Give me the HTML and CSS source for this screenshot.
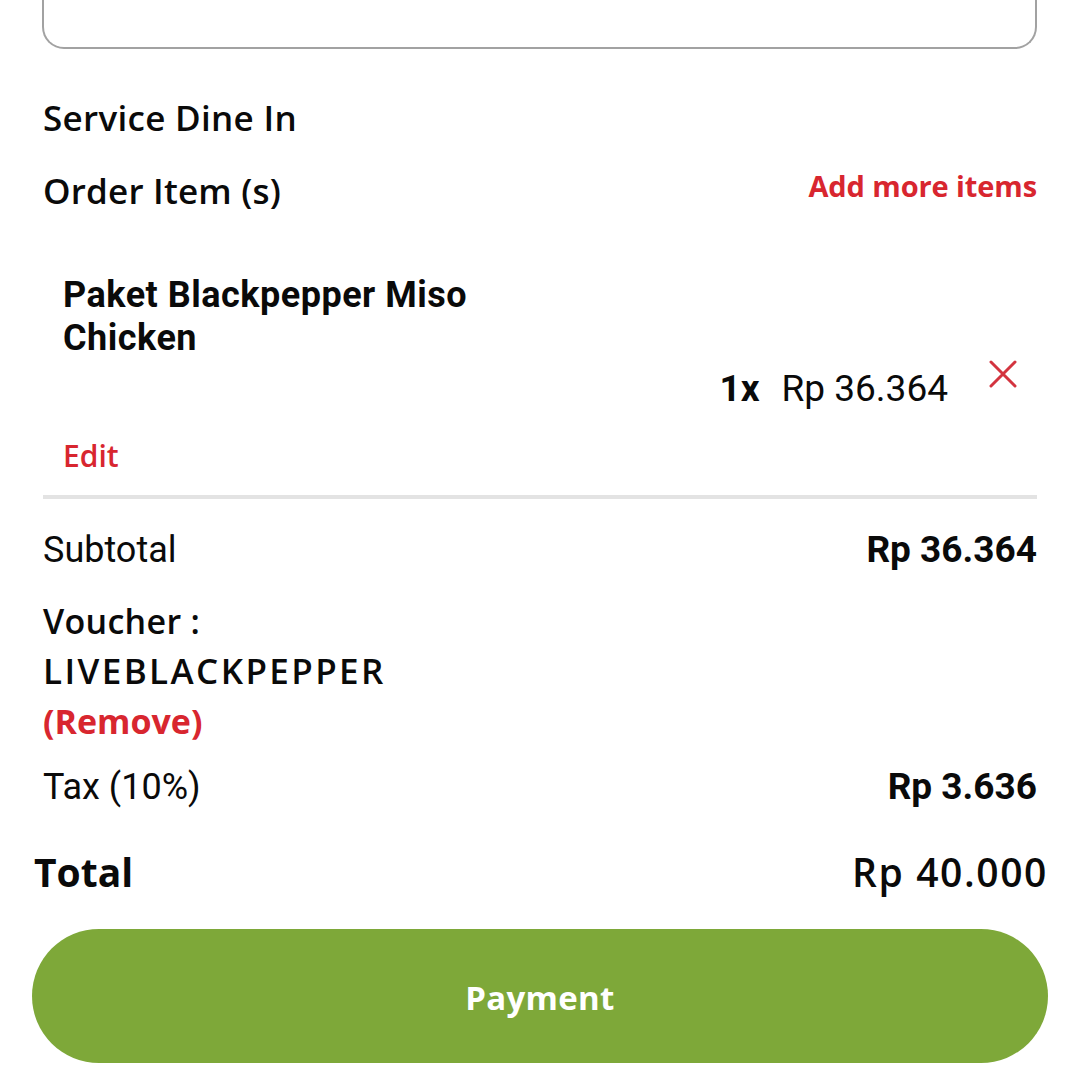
FILE: index.html
```html
<!DOCTYPE html>
<html lang="id">
<head>
<meta charset="utf-8">
<title>Order Summary</title>
<link rel="stylesheet" href="styles.css">
</head>
<body>
<div class="page">
  <div class="card-top"></div>

  <div class="service">Service Dine In</div>

  <div class="order-head">
    <span class="order-title">Order Item (s)</span>
    <span class="add-more">Add more items</span>
  </div>

  <div class="item">
    <div class="item-name">Paket Blackpepper Miso Chicken</div>
    <div class="item-qty">
      <span class="qty">1x</span>
      <span class="item-price">Rp 36.364</span>
      <svg class="remove-x" width="28" height="28" viewBox="0 0 28 28" aria-label="Remove item">
        <path d="M2 2 L26 26 M26 2 L2 26" stroke="#d3343f" stroke-width="3" stroke-linecap="round" fill="none"/>
      </svg>
    </div>
    <div class="edit">Edit</div>
  </div>

  <div class="divider"></div>

  <div class="row subtotal">
    <span class="row-label">Subtotal</span>
    <span class="row-value">Rp 36.364</span>
  </div>

  <div class="voucher">
    <div class="voucher-label">Voucher :</div>
    <div class="voucher-code">LIVEBLACKPEPPER</div>
    <div class="voucher-remove">(Remove)</div>
  </div>

  <div class="row tax">
    <span class="row-label">Tax (10%)</span>
    <span class="row-value">Rp 3.636</span>
  </div>

  <div class="total-row">
    <span class="total-label">Total</span>
    <span class="total-value">Rp 40.000</span>
  </div>

  <button class="pay" type="button">Payment</button>
</div>
</body>
</html>
```

FILE: styles.css
```css
* {
  box-sizing: border-box;
}

html, body {
  margin: 0;
  padding: 0;
  background: #ffffff;
}

body {
  width: 1080px;
  height: 1080px;
  overflow: hidden;
  color: #0a0a0a;
  font-family: "Open Sans", "Liberation Sans", sans-serif;
}

.page {
  padding: 0 43px;
  display: flex;
  flex-direction: column;
}

.card-top {
  height: 49px;
  border: 2px solid #a2a2a2;
  border-top: none;
  border-radius: 0 0 22px 22px;
  margin-left: -1px;
}

.service {
  margin-top: 47px;
  font-size: 35px;
  line-height: 44px;
  font-weight: 600;
  letter-spacing: 0.3px;
}

.order-head {
  margin-top: 29px;
  display: flex;
  justify-content: space-between;
  align-items: flex-start;
}

.order-title {
  font-size: 35px;
  line-height: 44px;
  font-weight: 600;
  letter-spacing: 0.2px;
}

.add-more {
  font-size: 29px;
  line-height: 34px;
  font-weight: 700;
  color: #d8262f;
  letter-spacing: -0.1px;
}

.item {
  margin-top: 61px;
  padding-left: 20px;
  display: flex;
  flex-direction: column;
}

.item-name {
  font-family: Roboto, "Liberation Sans", sans-serif;
  font-weight: 700;
  font-size: 36px;
  line-height: 43px;
  letter-spacing: 0.5px;
  width: 480px;
}

.item-qty {
  margin-top: 7px;
  display: flex;
  justify-content: flex-end;
  align-items: flex-start;
  font-family: Roboto, "Liberation Sans", sans-serif;
  font-size: 37px;
  line-height: 44px;
}

.qty {
  font-weight: 700;
}

.item-price {
  margin-left: 22px;
  font-weight: 400;
}

.remove-x {
  margin-left: 41px;
  margin-right: 20px;
  margin-top: -7px;
}

.edit {
  margin-top: 27px;
  font-size: 30px;
  line-height: 36px;
  font-weight: 600;
  color: #d8262f;
}

.divider {
  margin-top: 21px;
  height: 4px;
  background: #e3e3e3;
}

.row {
  display: flex;
  justify-content: space-between;
  align-items: baseline;
  font-family: Roboto, "Liberation Sans", sans-serif;
  line-height: 44px;
}

.row-label {
  font-size: 36px;
  font-weight: 400;
}

.row-value {
  font-size: 37px;
  font-weight: 700;
}

.subtotal {
  margin-top: 29px;
}

.voucher {
  margin-top: 24px;
  font-size: 34px;
  line-height: 50px;
}

.voucher-label {
  font-weight: 600;
  letter-spacing: 0.3px;
}

.voucher-code {
  font-size: 35px;
  font-weight: 600;
  letter-spacing: 2.4px;
}

.voucher-remove {
  font-weight: 700;
  color: #d8262f;
}

.tax {
  margin-top: 19px;
}

.total-row {
  margin: 38px -11px 0 -9px;
  display: flex;
  justify-content: space-between;
  align-items: baseline;
  line-height: 50px;
}

.total-label {
  font-size: 39px;
  font-weight: 700;
}

.total-value {
  font-size: 39px;
  font-weight: 600;
  letter-spacing: 1.6px;
}

.pay {
  margin: 32px -11px 0 -11px;
  height: 134px;
  border: none;
  border-radius: 67px;
  background: #7ea839;
  color: #ffffff;
  font-family: "Open Sans", "Liberation Sans", sans-serif;
  font-size: 33px;
  font-weight: 700;
  line-height: 44px;
  letter-spacing: 0.3px;
  padding: 3px 0 0 0;
  display: flex;
  align-items: center;
  justify-content: center;
}
```
